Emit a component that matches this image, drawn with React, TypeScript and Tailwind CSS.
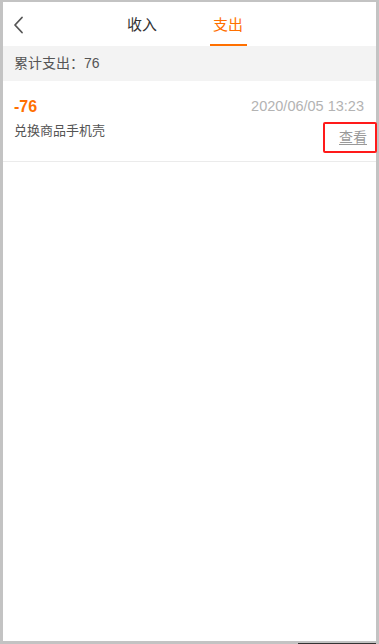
import { useState } from 'react';

const records = [
    { amount: '-76', time: '2020/06/05 13:23', title: '兑换商品手机壳' },
];

const App = () => {
    const [tab, setTab] = useState('out');
    return (
        <div
            className="relative w-[379px] h-[644px] bg-white border-l-[3px] border-r-[3px] border-t-[2px] border-b-[3px] border-[#c3c3c3] flex flex-col"
            style={{ fontFamily: '"Liberation Sans", "Noto Sans CJK SC", sans-serif' }}
        >
            {/* header tabs */}
            <div className="relative h-[44px] flex items-center shrink-0">
                <button className="absolute left-[9px] top-[14px] p-0">
                    <svg width="14" height="18" viewBox="0 0 14 18" fill="none">
                        <path d="M10 1.5 L3 9 L10 16.5" stroke="#555" strokeWidth="1.8" strokeLinecap="round" strokeLinejoin="round" />
                    </svg>
                </button>
                <div className="flex w-full justify-center gap-[49px] h-full pr-[9px]">
                    <button
                        onClick={() => setTab('in')}
                        className={`relative h-full flex items-center pt-[2px] text-[15px] w-[37px] justify-center ${tab === 'in' ? 'text-[#ff7000]' : 'text-[#333]'}`}
                    >
                        收入
                        {tab === 'in' && <span className="absolute bottom-0 left-0 right-0 h-[2px] bg-[#ff7000]" />}
                    </button>
                    <button
                        onClick={() => setTab('out')}
                        className={`relative h-full flex items-center pt-[2px] text-[15px] w-[37px] justify-center ${tab === 'out' ? 'text-[#ff7000]' : 'text-[#333]'}`}
                    >
                        支出
                        {tab === 'out' && <span className="absolute bottom-0 left-0 right-0 h-[2px] bg-[#ff7000]" />}
                    </button>
                </div>
            </div>

            <div className="h-[35px] bg-[#f3f3f3] flex items-center px-[11px] text-[14px] text-[#555] shrink-0">
                累计支出：76
            </div>

            {records.map((r, idx) => (
                <div key={idx} className="border-b border-[#ebebeb] pl-[11px] pt-[14px] pb-[8px]">
                    <div className="flex justify-between items-center pr-[12px]">
                        <span className="text-[16px] font-bold text-[#ff7000]">{r.amount}</span>
                        <span className="text-[14.5px] text-[#b3b3b3]">{r.time}</span>
                    </div>
                    <div className="flex justify-between items-start mt-[3px]">
                        <span className="text-[13px] text-[#555] -mt-[1px]">{r.title}</span>
                        <button className="border-2 border-[#ff1a1a] rounded-[2px] w-[54px] h-[31px] flex items-center justify-center pl-[6px] text-[14px] text-[#999] underline underline-offset-2 -mr-[1px]">
                            查看
                        </button>
                    </div>
                </div>
            ))}

            <div className="flex-1" />
            <div className="absolute right-0 -bottom-[3px] w-[78px] h-[1px] bg-[#333]" />
        </div>
    );
};

export default App;
